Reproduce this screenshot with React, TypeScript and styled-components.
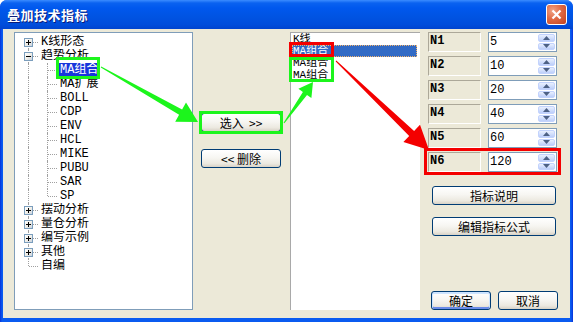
import React from 'react';
import styled, { createGlobalStyle } from 'styled-components';

const GlobalStyle = createGlobalStyle`
  html, body {
    margin: 0;
    padding: 0;
    background: #fff;
  }
  body {
    font-family: "Liberation Mono", "Noto Sans CJK SC", monospace;
    font-size: 12px;
    color: #000;
  }
`;

const cjk = `"Noto Sans CJK SC", "Liberation Sans", sans-serif`;
const mono = `"Liberation Mono", "Noto Sans CJK SC", monospace`;

const Window = styled.div`
  position: relative;
  width: 573px;
  height: 322px;
  display: flex;
  flex-direction: column;
  border-radius: 7px 7px 0 0;
  overflow: hidden;
  background: linear-gradient(90deg, #0831d9 0, #0a5bf0 2px, #0a5bf0 calc(100% - 2px), #0831d9 100%);
`;

const TitleBar = styled.div`
  height: 29px;
  flex: none;
  display: flex;
  align-items: center;
  justify-content: space-between;
  padding: 0 6px 0 7px;
  background: linear-gradient(#3b8cff 0, #0a62f0 3px, #0058ee 8px, #0054e3 55%, #004ddb 85%, #0044cf 100%);
`;

const Title = styled.span`
  font: bold 13px ${cjk};
  color: #fff;
  text-shadow: 1px 1px 0 #0a1b7a;
  letter-spacing: 0.5px;
`;

const CloseButton = styled.div`
  width: 21px;
  height: 21px;
  box-sizing: border-box;
  border: 1px solid #fff;
  border-radius: 3px;
  background: radial-gradient(circle at 30% 30%, #f0a486 0, #e06a45 45%, #c2411d 100%);
  display: flex;
  align-items: center;
  justify-content: center;
`;

const Body = styled.div`
  flex: 1;
  display: flex;
  margin: 0 3px 4px;
  padding: 3px 0 8px 11px;
  background: #ece9d8;
  min-height: 0;
`;

/* ---------- tree ---------- */

const Tree = styled.div`
  width: 179px;
  flex: none;
  box-sizing: border-box;
  background: #fff;
  border: 1px solid #7f9db9;
  padding-top: 2px;
`;

const TreeRow = styled.div`
  display: flex;
  height: 14px;
  padding-left: 4px;
`;

const Cell = styled.span<{ $up?: boolean; $down?: boolean; $right?: boolean }>`
  position: relative;
  width: 19px;
  height: 14px;
  flex: none;

  &::before {
    content: '';
    display: ${(p) => (p.$up || p.$down ? 'block' : 'none')};
    position: absolute;
    left: 9px;
    top: ${(p) => (p.$up ? '0' : '7px')};
    bottom: ${(p) => (p.$down ? '0' : '7px')};
    border-left: 1px dotted #a0a0a0;
  }

  &::after {
    content: '';
    display: ${(p) => (p.$right ? 'block' : 'none')};
    position: absolute;
    left: 10px;
    right: 0;
    top: 7px;
    border-top: 1px dotted #a0a0a0;
  }
`;

const Expander = styled.span<{ $open?: boolean }>`
  position: absolute;
  z-index: 1;
  left: 5px;
  top: 3px;
  width: 9px;
  height: 9px;
  box-sizing: border-box;
  border: 1px solid #7b9ebd;
  background: linear-gradient(135deg, #fff 0, #f1efe8 50%, #c9d2de 100%);

  &::before {
    content: '';
    position: absolute;
    left: 1px;
    right: 1px;
    top: 3px;
    height: 1px;
    background: #000;
  }

  &::after {
    content: '';
    display: ${(p) => (p.$open ? 'none' : 'block')};
    position: absolute;
    top: 1px;
    bottom: 1px;
    left: 3px;
    width: 1px;
    background: #000;
  }
`;

const TreeLabel = styled.span<{ $selected?: boolean }>`
  margin-left: 2px;
  padding: 0 1px;
  height: 14px;
  overflow: hidden;
  font: 12px/14px ${mono};
  white-space: nowrap;
  color: ${(p) => (p.$selected ? '#fff' : '#000')};
  background: ${(p) => (p.$selected ? '#1836dc' : 'transparent')};
`;

/* ---------- middle ---------- */

const Middle = styled.div`
  width: 97px;
  flex: none;
  box-sizing: border-box;
  padding: 81px 0 0 8px;
  display: flex;
  flex-direction: column;
  gap: 17px;
`;

const Button = styled.button<{ $w: number; $default?: boolean }>`
  width: ${(p) => p.$w}px;
  height: 19px;
  flex: none;
  box-sizing: border-box;
  padding: 0;
  border: 1px solid #003c74;
  border-radius: 3px;
  background: linear-gradient(#fff 0%, #f7f6f2 45%, #ece9e0 80%, #d8d2c6 100%);
  font: 12px/16px ${cjk};
  color: #000;
  white-space: pre;
  box-shadow: ${(p) =>
    p.$default ? 'inset 0 1px 0 1px #cde4ff, inset 0 -1px 0 1px #6a8be8' : 'none'};
`;

/* ---------- list ---------- */

const List = styled.div`
  width: 130px;
  flex: none;
  box-sizing: border-box;
  background: #fff;
  border-top: 1px solid #a9a9a9;
  border-left: 1px solid #a9a9a9;
  padding: 0 3px 0 1px;
`;

const ListItem = styled.div<{ $selected?: boolean }>`
  height: 12px;
  overflow: hidden;
  padding-left: 1px;
  box-sizing: border-box;
  font: 11px/12px ${mono};
  white-space: nowrap;
  color: ${(p) => (p.$selected ? '#fff' : '#000')};
  background: ${(p) => (p.$selected ? '#316ac5' : 'transparent')};
  outline: ${(p) => (p.$selected ? '1px dotted #f2b36b' : 'none')};
  outline-offset: -1px;
`;

/* ---------- side ---------- */

const Side = styled.div`
  width: 150px;
  flex: none;
  box-sizing: border-box;
  padding-left: 8px;
  display: flex;
  flex-direction: column;
`;

const Params = styled.div`
  display: flex;
  flex-direction: column;
  gap: 4px;
`;

const ParamRow = styled.div`
  display: flex;
  gap: 7px;
  height: 20px;
`;

const ParamLabel = styled.div`
  width: 53px;
  box-sizing: border-box;
  border: 1px solid;
  border-color: #aca899 #fff #fff #aca899;
  padding: 1px 0 0 1px;
  font: bold 12px/14px ${mono};
`;

const SpinBox = styled.div`
  width: 69px;
  box-sizing: border-box;
  display: flex;
  border: 1px solid #7f9db9;
  background: #fff;
`;

const SpinValue = styled.span`
  flex: 1;
  padding: 2px 0 0 1px;
  font: 12px/14px ${mono};
`;

const SpinButtons = styled.div`
  width: 17px;
  display: flex;
  flex-direction: column;
  gap: 1px;
  padding: 1px 1px 1px 0;
`;

const SpinBtn = styled.div`
  flex: 1;
  border-radius: 2px;
  border: 1px solid #c3d3fd;
  background: linear-gradient(#e9f0fe, #bccefa);
  display: flex;
  align-items: center;
  justify-content: center;
`;

const SideButtons = styled.div`
  margin: 14px 0 0 4px;
  display: flex;
  flex-direction: column;
  gap: 12px;
`;

const Footer = styled.div`
  margin: auto 0 0 3px;
  display: flex;
  gap: 7px;
`;

/* ---------- annotation overlay ---------- */

const Overlay = styled.svg`
  position: absolute;
  left: 0;
  top: 0;
  pointer-events: none;
`;

const arrow = (
  x1: number, y1: number, x2: number, y2: number,
  w0: number, w1: number, hl: number, hw: number,
) => {
  const len = Math.hypot(x2 - x1, y2 - y1);
  const ux = (x2 - x1) / len;
  const uy = (y2 - y1) / len;
  const nx = -uy;
  const ny = ux;
  const bx = x2 - ux * hl;
  const by = y2 - uy * hl;
  const p = (x: number, y: number) => `${x.toFixed(1)},${y.toFixed(1)}`;
  return [
    p(x1 + (nx * w0) / 2, y1 + (ny * w0) / 2),
    p(bx + (nx * w1) / 2, by + (ny * w1) / 2),
    p(bx + nx * hw, by + ny * hw),
    p(x2, y2),
    p(bx - nx * hw, by - ny * hw),
    p(bx - (nx * w1) / 2, by - (ny * w1) / 2),
    p(x1 - (nx * w0) / 2, y1 - (ny * w0) / 2),
  ].join(' ');
};

const Arrow = ({ d }: { d: 'up' | 'down' }) => (
  <svg width="7" height="4" viewBox="0 0 7 4">
    <polygon points={d === 'up' ? '0,4 3.5,0 7,4' : '0,0 3.5,4 7,0'} fill="#4d6185" />
  </svg>
);

const roots: { label: string; children?: string[] }[] = [
  { label: 'K线形态' },
  {
    label: '趋势分析',
    children: ['MA组合', 'MA扩展', 'BOLL', 'CDP', 'ENV', 'HCL', 'MIKE', 'PUBU', 'SAR', 'SP'],
  },
  { label: '摆动分析' },
  { label: '量仓分析' },
  { label: '编写示例' },
  { label: '其他' },
  { label: '自编' },
];

const params = [
  ['N1', '5'],
  ['N2', '10'],
  ['N3', '20'],
  ['N4', '40'],
  ['N5', '60'],
  ['N6', '120'],
];

const listItems = ['K线', 'MA组合', 'MA组合', 'MA组合'];

export default function App() {
  const green = '#1cf51c';
  const red = '#f40000';

  return (
    <>
      <GlobalStyle />
      <Window>
        <TitleBar>
          <Title>叠加技术指标</Title>
          <CloseButton>
            <svg width="11" height="11" viewBox="0 0 11 11">
              <path d="M1.5 1.5 L9.5 9.5 M9.5 1.5 L1.5 9.5" stroke="#fff" strokeWidth="2.2" />
            </svg>
          </CloseButton>
        </TitleBar>

        <Body>
          <Tree>
            {roots.map((r, i) => {
              const last = i === roots.length - 1;
              return (
                <React.Fragment key={r.label}>
                  <TreeRow>
                    <Cell $up={i > 0} $down={!last} $right>
                      {!last && <Expander $open={!!r.children} />}
                    </Cell>
                    <TreeLabel>{r.label}</TreeLabel>
                  </TreeRow>
                  {r.children?.map((c, j) => (
                    <TreeRow key={c}>
                      <Cell $up $down />
                      <Cell $up $down={j < r.children!.length - 1} $right />
                      <TreeLabel $selected={j === 0}>{c}</TreeLabel>
                    </TreeRow>
                  ))}
                </React.Fragment>
              );
            })}
          </Tree>

          <Middle>
            <Button $w={80}>{'选入  >>'}</Button>
            <Button $w={80}>{'<< 删除'}</Button>
          </Middle>

          <List>
            {listItems.map((t, i) => (
              <ListItem key={i} $selected={i === 1}>
                {t}
              </ListItem>
            ))}
          </List>

          <Side>
            <Params>
              {params.map(([n, v]) => (
                <ParamRow key={n}>
                  <ParamLabel>{n}</ParamLabel>
                  <SpinBox>
                    <SpinValue>{v}</SpinValue>
                    <SpinButtons>
                      <SpinBtn>
                        <Arrow d="up" />
                      </SpinBtn>
                      <SpinBtn>
                        <Arrow d="down" />
                      </SpinBtn>
                    </SpinButtons>
                  </SpinBox>
                </ParamRow>
              ))}
            </Params>
            <SideButtons>
              <Button $w={124}>指标说明</Button>
              <Button $w={124}>编辑指标公式</Button>
            </SideButtons>
            <Footer>
              <Button $w={60} $default>
                确定
              </Button>
              <Button $w={60}>取消</Button>
            </Footer>
          </Side>
        </Body>

        <Overlay width={573} height={322} viewBox="0 0 573 322">
          <g fill="none" strokeWidth={3}>
            <rect x={57.5} y={58.5} width={41} height={19} stroke={green} />
            <rect x={200.5} y={112.5} width={81} height={20} stroke={green} />
            <rect x={290.5} y={58.5} width={42} height={22} stroke={green} />
            <rect x={290.5} y={43.5} width={42} height={12} stroke={red} />
            <rect x={425.5} y={149.5} width={134} height={24} stroke={red} />
          </g>
          <polygon points={arrow(101, 67, 198, 122, 1, 6, 20, 11)} fill={green} />
          <polygon points={arrow(284, 123, 313, 82, 1, 5, 14, 8)} fill={green} />
          <polygon points={arrow(336, 61, 429, 150, 1, 7, 24, 12)} fill={red} />
        </Overlay>
      </Window>
    </>
  );
}
